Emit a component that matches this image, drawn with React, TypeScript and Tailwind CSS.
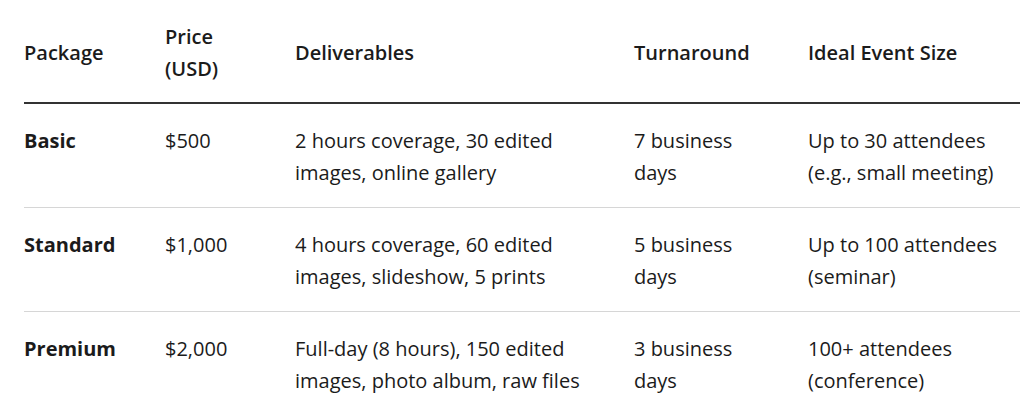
import React from 'react';

const rows = [
  {
    name: 'Basic',
    price: '$500',
    deliverables: '2 hours coverage, 30 edited images, online gallery',
    turnaround: '7 business days',
    size: 'Up to 30 attendees (e.g., small meeting)',
  },
  {
    name: 'Standard',
    price: '$1,000',
    deliverables: '4 hours coverage, 60 edited images, slideshow, 5 prints',
    turnaround: '5 business days',
    size: 'Up to 100 attendees (seminar)',
  },
  {
    name: 'Premium',
    price: '$2,000',
    deliverables: 'Full-day (8 hours), 150 edited images, photo album, raw files',
    turnaround: '3 business days',
    size: '100+ attendees (conference)',
  },
];

const App: React.FC = () => {
  return (
    <div className="bg-white w-[1024px] h-[416px] overflow-hidden pl-6 pr-1 font-['Open_Sans',sans-serif] text-[20px] leading-8 text-[#1b1b1b]">
      <table className="w-full table-fixed border-collapse text-left">
        <colgroup>
          <col className="w-[141px]" />
          <col className="w-[130px]" />
          <col className="w-[339px]" />
          <col className="w-[174px]" />
          <col />
        </colgroup>
        <thead>
          <tr className="border-b-2 border-[#333333]">
            <th className="pt-[21px] pb-[17px] pr-8 font-semibold align-middle">Package</th>
            <th className="pt-[21px] pb-[17px] pr-8 font-semibold align-middle">Price (USD)</th>
            <th className="pt-[21px] pb-[17px] pr-8 font-semibold align-middle">Deliverables</th>
            <th className="pt-[21px] pb-[17px] pr-8 font-semibold align-middle">Turnaround</th>
            <th className="pt-[21px] pb-[17px] font-semibold align-middle">Ideal Event Size</th>
          </tr>
        </thead>
        <tbody>
          {rows.map((row, i) => (
            <tr key={row.name} className={i < rows.length - 1 ? 'border-b border-[#d6d6d6]' : ''}>
              <td className="pt-[21px] pb-[18px] pr-8 align-top font-bold">{row.name}</td>
              <td className="pt-[21px] pb-[18px] pr-8 align-top">{row.price}</td>
              <td className="pt-[21px] pb-[18px] pr-8 align-top">{row.deliverables}</td>
              <td className="pt-[21px] pb-[18px] pr-8 align-top">{row.turnaround}</td>
              <td className="pt-[21px] pb-[18px] align-top">{row.size}</td>
            </tr>
          ))}
        </tbody>
      </table>
    </div>
  );
};

export default App;
